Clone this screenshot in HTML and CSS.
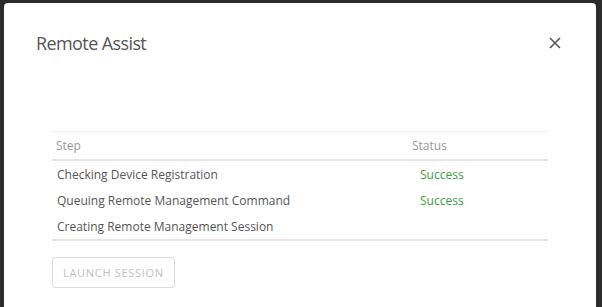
FILE: index.html
```html
<!DOCTYPE html>
<html lang="en">
<head>
    <meta charset="UTF-8">
    <meta name="viewport" content="width=device-width, initial-scale=1.0">
    <title>Remote Assist</title>
    <link rel="stylesheet" href="styles.css">
</head>
<body>
<div class="modal">
    <div class="modal-header">
        <h2 class="modal-title">Remote Assist</h2>
        <button class="close" aria-label="Close">
            <svg width="12" height="12" viewBox="0 0 12 12">
                <path d="M1 1 L11 11 M11 1 L1 11" stroke="#555" stroke-width="1.6" fill="none"/>
            </svg>
        </button>
    </div>

    <div class="modal-body">
        <table class="steps">
            <thead>
                <tr>
                    <th class="col-step">Step</th>
                    <th class="col-status">Status</th>
                </tr>
            </thead>
            <tbody>
                <tr>
                    <td>Checking Device Registration</td>
                    <td class="success">Success</td>
                </tr>
                <tr>
                    <td>Queuing Remote Management Command</td>
                    <td class="success">Success</td>
                </tr>
                <tr>
                    <td>Creating Remote Management Session</td>
                    <td></td>
                </tr>
            </tbody>
        </table>

        <button class="launch" disabled>Launch Session</button>
    </div>
</div>
</body>
</html>
```

FILE: styles.css
```css
html, body {
    height: 100%;
}
body {
    margin: 0;
    padding: 3px 6px 0 4px;
    box-sizing: border-box;
    background: #2c2c2c;
    font-family: "Open Sans", Arial, sans-serif;
    overflow: hidden;
}
.modal {
    background: white;
    border-radius: 4px 4px 0 0;
    height: 340px;
}
.modal-header {
    display: flex;
    align-items: center;
    justify-content: space-between;
    padding: 28px 35px 0 32px;
}
.modal-title {
    margin: 0;
    font-size: 18px;
    letter-spacing: -0.6px;
    font-weight: normal;
    color: #555;
}
.close {
    background: none;
    border: none;
    padding: 0;
    cursor: pointer;
    display: flex;
}
.modal-body {
    padding: 76px 48px 0 48px;
}
.steps {
    width: 100%;
    border-collapse: collapse;
    border-top: 1px solid #f2f2f2;
    border-bottom: 2px solid #e4e4e4;
    font-size: 12px;
    color: #555;
}
.steps th {
    text-align: left;
    font-weight: normal;
    color: #999;
    height: 27px;
    padding: 0 4px;
    border-bottom: 2px solid #e4e4e4;
}
.steps td {
    height: 26px;
    padding: 0 5px;
}
.col-status {
    width: 132px;
}
.success {
    color: #3a9e3a;
    padding-left: 12px !important;
}
.launch {
    margin-top: 16px;
    padding: 0 10px;
    height: 31px;
    background: white;
    border: 1px solid #dcdcdc;
    border-radius: 3px;
    font-family: "Open Sans", Arial, sans-serif;
    font-size: 11px;
    letter-spacing: 0.7px;
    text-transform: uppercase;
    color: #c0c0c0;
}
```
